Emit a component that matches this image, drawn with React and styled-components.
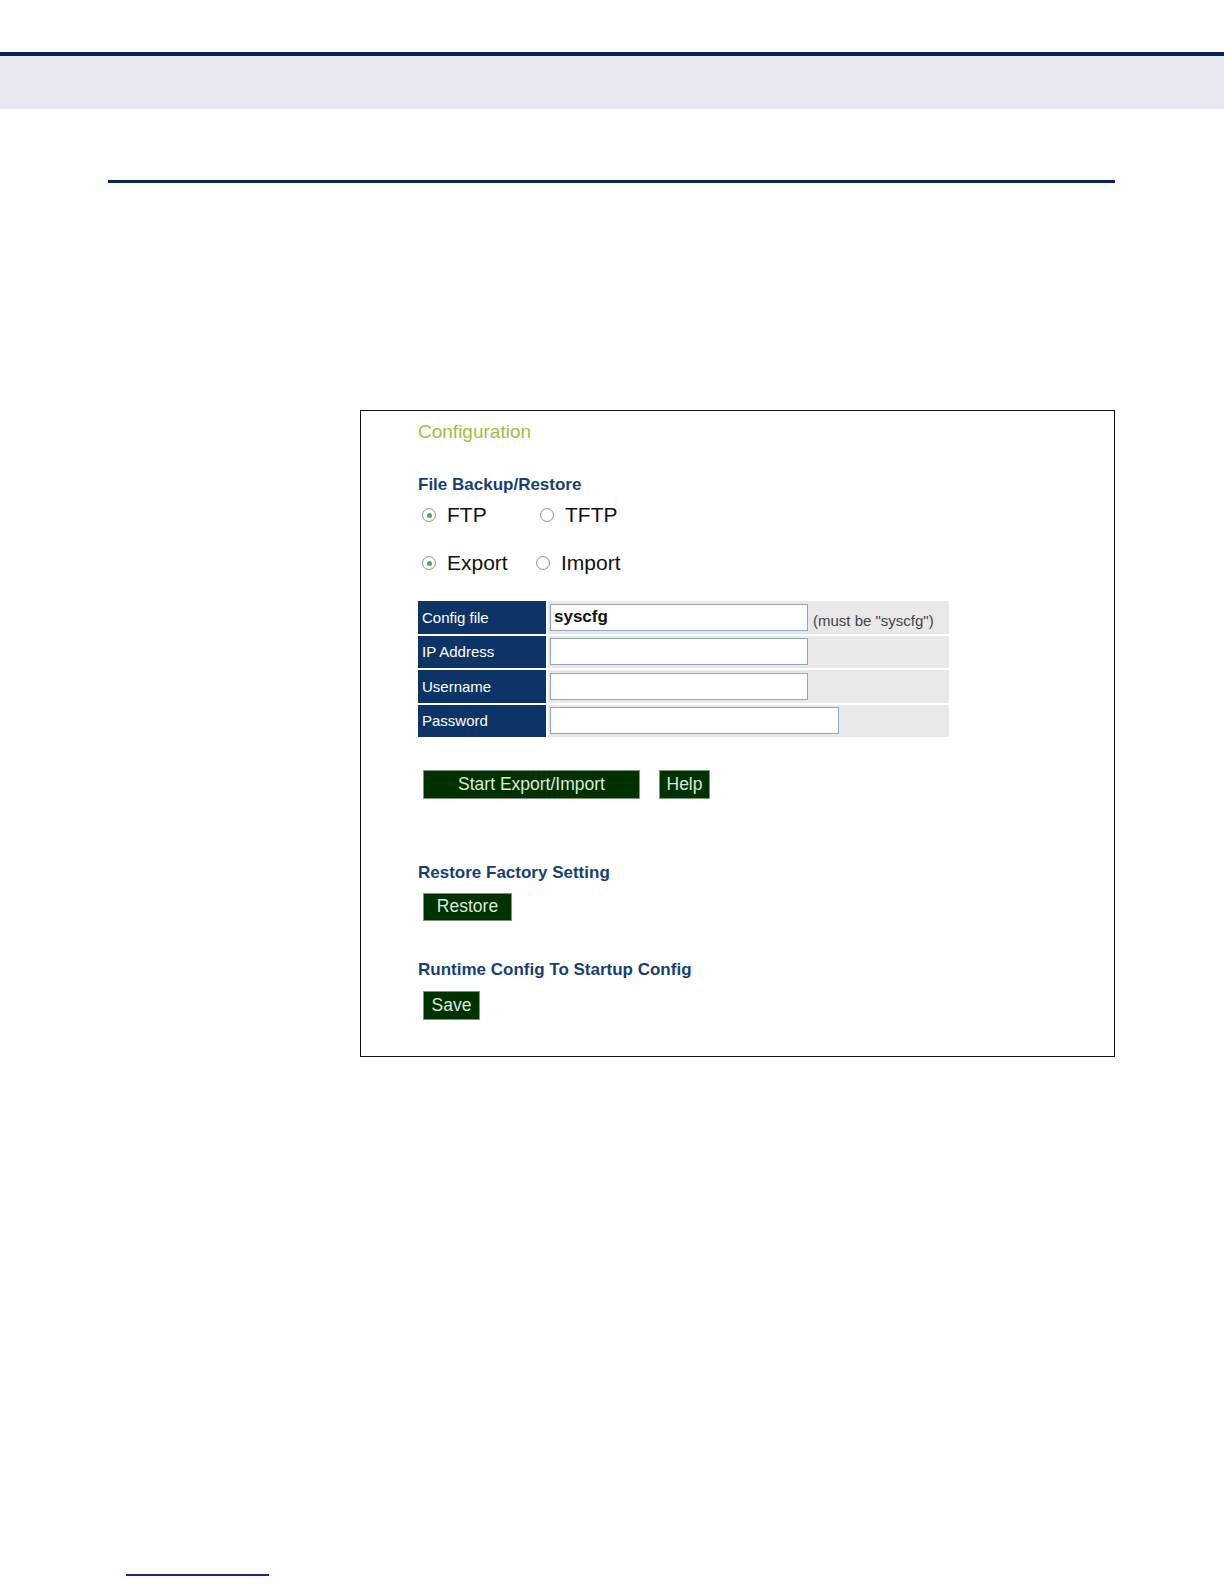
import { createGlobalStyle } from "styled-components";
import styled from "styled-components";
import { Fragment } from "react";

const GlobalStyle = createGlobalStyle`
  body {
    margin: 0;
    background: #fff;
    font-family: "Liberation Sans", Arial, sans-serif;
  }
`;

const Page = styled.div`
  width: 1224px;
  height: 1584px;
  padding-top: 52px;
  box-sizing: border-box;
  overflow: hidden;
`;

const TopBand = styled.div`
  height: 53px;
  border-top: 4px solid #0c2157;
  background: #e5e9ef;
`;

const Content = styled.div`
  padding: 71px 0 0 108px;
`;

const Rule = styled.div`
  width: 1007px;
  height: 3px;
  background: #0c2157;
`;

const Panel = styled.div`
  margin: 227px 0 0 252px;
  width: 755px;
  height: 647px;
  box-sizing: border-box;
  border: 1px solid #111;
  padding: 9px 0 0 57px;
`;

const Title = styled.div`
  color: #99c33c;
  font-size: 19px;
  line-height: 24px;
`;

const Section = styled.div`
  color: #173f74;
  font-size: 17px;
  font-weight: bold;
  line-height: 20px;
  margin-top: ${(p) => p.$top}px;
`;

const RadioRow = styled.div`
  display: flex;
  align-items: center;
  height: 26px;
  margin-top: ${(p) => p.$top}px;
`;

const RadioItem = styled.label`
  display: flex;
  align-items: center;
  width: ${(p) => p.$width}px;
  font-size: 21px;
  color: #111;
`;

const Radio = styled.span`
  width: 14px;
  height: 14px;
  box-sizing: border-box;
  margin: 0 11px 0 4px;
  border-radius: 50%;
  border: 1px solid #8a9aa8;
  background: radial-gradient(circle, #fff 50%, #e1e5ea 100%);
  display: flex;
  align-items: center;
  justify-content: center;

  &::after {
    content: "";
    width: 5px;
    height: 5px;
    border-radius: 50%;
    background: ${(p) => (p.$checked ? "#3cb34a" : "transparent")};
  }
`;

const Table = styled.div`
  margin-top: 25px;
  width: 531px;
  display: grid;
  grid-template-columns: 128px 401px;
  column-gap: 2px;
  row-gap: 2px;
`;

const LabelCell = styled.div`
  background: #0d3466;
  color: #fff;
  font-size: 15px;
  height: 32.5px;
  display: flex;
  align-items: center;
  padding-left: 4px;
`;

const ValueCell = styled.div`
  background: #e8e8e8;
  height: 32.5px;
  display: flex;
  align-items: center;
  padding-left: 2px;
`;

const Input = styled.div`
  width: ${(p) => p.$width}px;
  height: 27px;
  box-sizing: border-box;
  border: 1px solid #8fa6c4;
  background: #fff;
  font-size: 17px;
  font-weight: bold;
  color: #111;
  padding-left: 3px;
  display: flex;
  align-items: center;
`;

const Hint = styled.span`
  margin: 6px 0 0 5px;
  font-size: 15px;
  color: #444;
`;

const ButtonRow = styled.div`
  display: flex;
  gap: 19px;
  margin-top: 33px;
  padding-left: 5px;
`;

const Button = styled.div`
  width: ${(p) => p.$width}px;
  height: 28.5px;
  box-sizing: border-box;
  background: #003200;
  border: 1px solid #7f957f;
  color: #dbe9d6;
  font-size: 17.5px;
  display: flex;
  align-items: center;
  justify-content: center;
  margin-top: ${(p) => p.$top || 0}px;
  margin-left: ${(p) => p.$left || 0}px;
`;

const FooterLine = styled.div`
  margin: 517px 0 0 18px;
  width: 143px;
  height: 2px;
  background: #1c2a8a;
`;

const rows = [
  { label: "Config file", value: "syscfg", width: 258, hint: '(must be "syscfg")' },
  { label: "IP Address", width: 258 },
  { label: "Username", width: 258 },
  { label: "Password", width: 289 },
];

export default function App() {
  return (
    <>
      <GlobalStyle />
      <Page>
        <TopBand />
        <Content>
          <Rule />
          <Panel>
            <Title>Configuration</Title>
            <Section $top={31}>File Backup/Restore</Section>
            <RadioRow $top={7}>
              <RadioItem $width={118}>
                <Radio $checked />
                FTP
              </RadioItem>
              <RadioItem>
                <Radio />
                TFTP
              </RadioItem>
            </RadioRow>
            <RadioRow $top={22}>
              <RadioItem $width={114}>
                <Radio $checked />
                Export
              </RadioItem>
              <RadioItem>
                <Radio />
                Import
              </RadioItem>
            </RadioRow>
            <Table>
              {rows.map(({ label, value, width, hint }) => (
                <Fragment key={label}>
                  <LabelCell>{label}</LabelCell>
                  <ValueCell>
                    <Input $width={width}>{value}</Input>
                    {hint && <Hint>{hint}</Hint>}
                  </ValueCell>
                </Fragment>
              ))}
            </Table>
            <ButtonRow>
              <Button $width={217}>Start Export/Import</Button>
              <Button $width={51}>Help</Button>
            </ButtonRow>
            <Section $top={64}>Restore Factory Setting</Section>
            <Button $width={89} $top={10} $left={5}>
              Restore
            </Button>
            <Section $top={39}>Runtime Config To Startup Config</Section>
            <Button $width={57} $top={11} $left={5}>
              Save
            </Button>
          </Panel>
          <FooterLine />
        </Content>
      </Page>
    </>
  );
}
